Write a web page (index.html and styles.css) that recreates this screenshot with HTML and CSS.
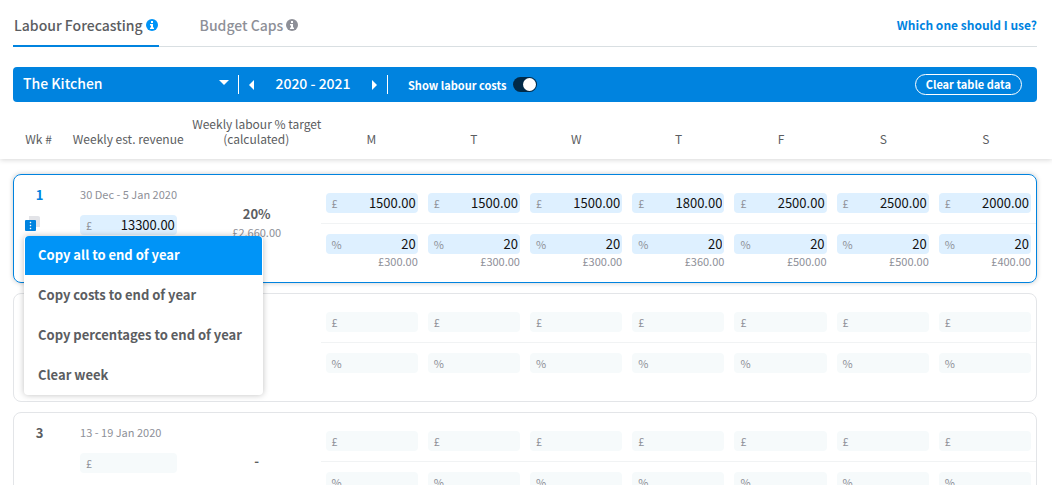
FILE: index.html
```html
<!DOCTYPE html>
<html lang="en">
<head>
<meta charset="utf-8">
<meta name="viewport" content="width=device-width, initial-scale=1">
<title>Labour Forecasting</title>
<link rel="stylesheet" href="styles.css">
</head>
<body>
<header class="tabs-bar">
  <nav class="tabs">
    <a class="tab tab-active" href="#forecasting">Labour Forecasting
      <svg class="info" viewBox="0 0 12 12" aria-hidden="true"><circle cx="6" cy="6" r="6" fill="currentColor"/><path d="M5 2h2v2H5zM4 5h3v3.500h1v1.500H4V8.500h1v-2H4z" fill="#fff"/></svg>
    </a>
    <a class="tab" href="#caps">Budget Caps
      <svg class="info" viewBox="0 0 12 12" aria-hidden="true"><circle cx="6" cy="6" r="6" fill="currentColor"/><path d="M5 2h2v2H5zM4 5h3v3.500h1v1.500H4V8.500h1v-2H4z" fill="#fff"/></svg>
    </a>
  </nav>
  <a class="help" href="#help">Which one should I use?</a>
</header>

<section class="toolbar">
  <div class="picker">
    <select class="site" aria-label="Site"><option>The Kitchen</option></select>
    <svg class="caret" viewBox="0 0 10 5" aria-hidden="true"><path d="M0 0h10L5 5z" fill="#fff"/></svg>
  </div>
  <div class="years">
    <button class="step" type="button" aria-label="Previous year"><svg viewBox="0 0 5 10"><path d="M5 0v10L0 5z" fill="#fff"/></svg></button>
    <span class="year">2020 - 2021</span>
    <button class="step" type="button" aria-label="Next year"><svg viewBox="0 0 5 10"><path d="M0 0v10l5-5z" fill="#fff"/></svg></button>
  </div>
  <label class="switch">Show labour costs <input type="checkbox" checked></label>
  <button class="clear" type="button">Clear table data</button>
</section>

<table class="forecast">
  <thead>
    <tr class="row">
      <th>Wk #</th><th>Weekly est. revenue</th><th>Weekly labour % target<br>(calculated)</th>
      <th>M</th><th>T</th><th>W</th><th>T</th><th>F</th><th>S</th><th>S</th>
    </tr>
  </thead>
  <tbody>
    <tr class="row week week-active">
      <td class="number">1
        <div class="actions">
          <button class="more" type="button" aria-label="Week actions"><svg viewBox="0 0 15 15"><path d="M4 0h9a2 2 0 0 1 2 2v9H4z" fill="#e3e4e8"/><rect y="4" width="11" height="11" rx="1" fill="#0083df"/><path d="M5 6h1v1H5zM5 9h1v1H5zM5 12h1v1H5z" fill="#fff" stroke="#fff" stroke-width=".4"/></svg></button>
          <div class="menu">
            <button class="item item-active" type="button">Copy all to end of year</button>
            <button class="item" type="button">Copy costs to end of year</button>
            <button class="item" type="button">Copy percentages to end of year</button>
            <button class="item" type="button">Clear week</button>
          </div>
        </div>
      </td>
      <td class="revenue"><span class="dates">30 Dec - 5 Jan 2020</span><label class="field filled">£<input aria-label="Weekly revenue" value="13300.00"></label></td>
      <td class="target"><strong>20%</strong><span class="cost">£2,660.00</span></td>
      <td class="day"><div class="amount"><label class="field filled">£<input aria-label="Monday revenue" value="1500.00"></label></div><div class="share"><label class="field filled">%<input aria-label="Monday percentage" value="20"></label><span class="cost">£300.00</span></div></td>
      <td class="day"><div class="amount"><label class="field filled">£<input aria-label="Tuesday revenue" value="1500.00"></label></div><div class="share"><label class="field filled">%<input aria-label="Tuesday percentage" value="20"></label><span class="cost">£300.00</span></div></td>
      <td class="day"><div class="amount"><label class="field filled">£<input aria-label="Wednesday revenue" value="1500.00"></label></div><div class="share"><label class="field filled">%<input aria-label="Wednesday percentage" value="20"></label><span class="cost">£300.00</span></div></td>
      <td class="day"><div class="amount"><label class="field filled">£<input aria-label="Thursday revenue" value="1800.00"></label></div><div class="share"><label class="field filled">%<input aria-label="Thursday percentage" value="20"></label><span class="cost">£360.00</span></div></td>
      <td class="day"><div class="amount"><label class="field filled">£<input aria-label="Friday revenue" value="2500.00"></label></div><div class="share"><label class="field filled">%<input aria-label="Friday percentage" value="20"></label><span class="cost">£500.00</span></div></td>
      <td class="day"><div class="amount"><label class="field filled">£<input aria-label="Saturday revenue" value="2500.00"></label></div><div class="share"><label class="field filled">%<input aria-label="Saturday percentage" value="20"></label><span class="cost">£500.00</span></div></td>
      <td class="day"><div class="amount"><label class="field filled">£<input aria-label="Sunday revenue" value="2000.00"></label></div><div class="share"><label class="field filled">%<input aria-label="Sunday percentage" value="20"></label><span class="cost">£400.00</span></div></td>
    </tr>
    <tr class="row week">
      <td class="number"></td>
      <td class="revenue"></td>
      <td class="target"></td>
      <td class="day"><div class="amount"><label class="field">£<input aria-label="Monday revenue"></label></div><div class="share"><label class="field">%<input aria-label="Monday percentage"></label></div></td>
      <td class="day"><div class="amount"><label class="field">£<input aria-label="Tuesday revenue"></label></div><div class="share"><label class="field">%<input aria-label="Tuesday percentage"></label></div></td>
      <td class="day"><div class="amount"><label class="field">£<input aria-label="Wednesday revenue"></label></div><div class="share"><label class="field">%<input aria-label="Wednesday percentage"></label></div></td>
      <td class="day"><div class="amount"><label class="field">£<input aria-label="Thursday revenue"></label></div><div class="share"><label class="field">%<input aria-label="Thursday percentage"></label></div></td>
      <td class="day"><div class="amount"><label class="field">£<input aria-label="Friday revenue"></label></div><div class="share"><label class="field">%<input aria-label="Friday percentage"></label></div></td>
      <td class="day"><div class="amount"><label class="field">£<input aria-label="Saturday revenue"></label></div><div class="share"><label class="field">%<input aria-label="Saturday percentage"></label></div></td>
      <td class="day"><div class="amount"><label class="field">£<input aria-label="Sunday revenue"></label></div><div class="share"><label class="field">%<input aria-label="Sunday percentage"></label></div></td>
    </tr>
    <tr class="row week">
      <td class="number">3</td>
      <td class="revenue"><span class="dates">13 - 19 Jan 2020</span><label class="field">£<input aria-label="Weekly revenue"></label></td>
      <td class="target"><strong>-</strong></td>
      <td class="day"><div class="amount"><label class="field">£<input aria-label="Monday revenue"></label></div><div class="share"><label class="field">%<input aria-label="Monday percentage"></label></div></td>
      <td class="day"><div class="amount"><label class="field">£<input aria-label="Tuesday revenue"></label></div><div class="share"><label class="field">%<input aria-label="Tuesday percentage"></label></div></td>
      <td class="day"><div class="amount"><label class="field">£<input aria-label="Wednesday revenue"></label></div><div class="share"><label class="field">%<input aria-label="Wednesday percentage"></label></div></td>
      <td class="day"><div class="amount"><label class="field">£<input aria-label="Thursday revenue"></label></div><div class="share"><label class="field">%<input aria-label="Thursday percentage"></label></div></td>
      <td class="day"><div class="amount"><label class="field">£<input aria-label="Friday revenue"></label></div><div class="share"><label class="field">%<input aria-label="Friday percentage"></label></div></td>
      <td class="day"><div class="amount"><label class="field">£<input aria-label="Saturday revenue"></label></div><div class="share"><label class="field">%<input aria-label="Saturday percentage"></label></div></td>
      <td class="day"><div class="amount"><label class="field">£<input aria-label="Sunday revenue"></label></div><div class="share"><label class="field">%<input aria-label="Sunday percentage"></label></div></td>
    </tr>
  </tbody>
</table>
</body>
</html>
```

FILE: styles.css
```css
* { box-sizing: border-box; }

body {
  margin: 0;
  background: #fff;
  color: #5b5d61;
  font: 12px/16px "Noto Sans CJK SC", "Noto Sans", sans-serif;
}

button, input, select {
  margin: 0;
  padding: 0;
  border: 0;
  background: none;
  color: inherit;
  font: inherit;
}

button { cursor: pointer; }
a { text-decoration: none; }
svg { display: block; }

/* Tabs */
.tabs-bar {
  display: flex;
  justify-content: space-between;
  margin: 0 15px 20px 13px;
  padding-top: 5px;
  box-shadow: inset 0 -1px #d9dfe2;
}

.tabs { display: flex; gap: 40px; }

.tab {
  display: flex;
  align-items: center;
  gap: 3px;
  height: 42px;
  padding: 0 1px;
  border-bottom: 2px solid transparent;
  color: #8e9098;
  font-size: 14px;
  font-weight: 500;
}

.tab-active { border-color: #0083df; color: #5b5d61; }
.info { width: 12px; height: 12px; }
.tab-active .info { color: #0094f7; }

.help {
  color: #0083df;
  font-weight: 700;
  line-height: 40px;
}

/* Toolbar */
.toolbar {
  display: flex;
  align-items: center;
  height: 35px;
  margin: 0 15px 0 13px;
  padding: 0 15px 0 10px;
  border-radius: 4px;
  background: #0083df;
  color: #fff;
  font-size: 11px;
  font-weight: 700;
}

.picker {
  display: grid;
  grid-template-columns: 196px 10px;
  align-items: center;
  padding-right: 9px;
}

.site {
  grid-area: 1 / 1 / 2 / 3;
  appearance: none;
  padding-bottom: 4px;
  font-size: 14px;
  font-weight: 500;
  line-height: 20px;
}

.caret { grid-area: 1 / 2; width: 10px; height: 5px; margin-bottom: 5px; pointer-events: none; }

.years {
  display: flex;
  align-items: center;
  justify-content: space-between;
  width: 150px;
  height: 19px;
  padding: 0 10px;
  border: solid #fff;
  border-width: 0 1px;
}

.year { padding-bottom: 4px; font-size: 14px; font-weight: 500; }
.step svg { width: 5px; height: 10px; }

.switch {
  display: flex;
  align-items: center;
  gap: 7px;
  margin-left: 20px;
}

.switch input {
  appearance: none;
  width: 24px;
  height: 15px;
  padding: 1px;
  border-radius: 8px;
  background: #012a48;
}

.switch input::before {
  content: "";
  display: block;
  width: 13px;
  height: 13px;
  margin-left: auto;
  border-radius: 50%;
  background: #fff;
}

.clear {
  height: 21px;
  margin-left: auto;
  padding: 0 10px 1px;
  border: 1px solid #fff;
  border-radius: 11px;
}

/* Table */
.forecast, thead { display: block; }

.row {
  display: grid;
  grid-template-columns: minmax(0, 2fr) minmax(0, 5fr) minmax(0, 5fr) repeat(7, minmax(0, 4fr));
}

thead {
  padding: 14px 15px 13px 13px;
  box-shadow: 0 1px 5px rgba(0, 0, 0, .16);
  clip-path: inset(0 0 -8px);
}

thead .row { align-items: end; }

th {
  padding: 0;
  font-weight: 400;
  line-height: 15px;
  text-align: center;
  white-space: nowrap;
}

tbody {
  display: flex;
  flex-direction: column;
  gap: 10px;
  padding: 15px 15px 15px 13px;
}

td { padding: 0; }

.week {
  min-height: 109px;
  border: 1px solid #e3e5e8;
  border-radius: 8px;
}

.week-active {
  border-color: #0083df;
  box-shadow: 0 0 5px rgba(0, 0, 0, .22);
}

.number {
  padding-top: 12px;
  font-size: 13px;
  font-weight: 700;
  text-align: center;
}

.week-active .number { color: #0083df; }

.actions {
  position: relative;
  margin-top: 13px;
  padding-left: 11px;
  text-align: left;
}

.more { display: block; }
.more svg { width: 15px; height: 15px; }

.menu {
  position: absolute;
  z-index: 1;
  top: 20px;
  left: 10px;
  display: flex;
  flex-direction: column;
  gap: 1px;
  min-width: 239px;
  padding: 0 1px;
  border-radius: 4px;
  background: #fff;
  box-shadow: 0 0 6px rgba(0, 0, 0, .25);
}

.item {
  height: 39px;
  padding: 0 13px 2px;
  border-radius: 4px 4px 0 0;
  color: #5b5d61;
  font-size: 13px;
  font-weight: 700;
  text-align: left;
  white-space: nowrap;
}

.item-active { background: #0094f7; color: #fff; }

.revenue { padding: 11px 16px 0 15px; }

.dates {
  display: block;
  margin-bottom: 13px;
  color: #8e9098;
  font-size: 11px;
  white-space: nowrap;
}

.target {
  display: flex;
  flex-direction: column;
  align-items: center;
  justify-content: center;
  gap: 2px;
  padding-bottom: 11px;
}

.target strong { font-size: 13px; font-weight: 700; }

.cost {
  color: #8e9098;
  font-size: 11px;
}

.share .cost { display: block; line-height: 15px; }

.amount { padding: 18px 5px 10px; border-bottom: 1px solid #f1f3f4; }
.share { padding: 10px 5px 0; text-align: right; }

.field {
  display: flex;
  align-items: center;
  height: 20px;
  padding: 0 2px 0 6px;
  border-radius: 4px;
  background: #f6fafb;
  color: #8e9098;
  font-size: 11px;
}

.filled { background: #def0ff; }

.field input {
  flex: 1;
  min-width: 0;
  color: #111;
  font-size: 13px;
  text-align: right;
}
```
